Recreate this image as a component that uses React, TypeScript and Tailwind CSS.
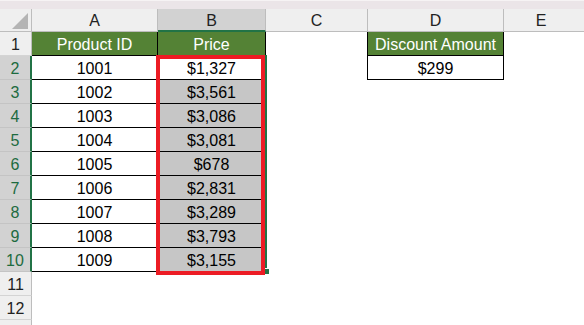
const COLS = "grid grid-cols-[32px_126px_108px_102px_136px_1fr]"
const CELL = "flex items-center justify-center pt-[3px]"

const prices = [
  ["1001", "$1,327"],
  ["1002", "$3,561"],
  ["1003", "$3,086"],
  ["1004", "$3,081"],
  ["1005", "$678"],
  ["1006", "$2,831"],
  ["1007", "$3,289"],
  ["1008", "$3,793"],
  ["1009", "$3,155"],
]

function RowHead({ n, selected }: { n?: number; selected?: boolean }) {
  return selected ? (
    <div className={`${CELL} border-b border-r-2 border-b-[#c4c4c4] border-r-[#217346] bg-[#d2d2d2] text-[#1d6b40]`}>
      {n}
    </div>
  ) : (
    <div className={`${CELL} border-b border-r border-b-[#d4d4d4] border-r-[#bdbdbd] bg-[#efefef] text-[#222]`}>
      {n}
    </div>
  )
}

function ColumnHeaders() {
  return (
    <div className={`${COLS} h-[23px] bg-[#efefef] text-[#222]`}>
      <div className="relative border-b border-r border-[#bdbdbd]">
        <svg className="absolute left-[12px] top-[4px]" width="17" height="16" viewBox="0 0 17 16">
          <polygon points="16,0 16,16 0,16" fill="#b4b4b4" />
        </svg>
      </div>
      <div className="flex items-center justify-center border-b border-r border-[#bdbdbd] pt-[2px]">A</div>
      <div className="flex items-center justify-center border-b-2 border-r border-b-[#217346] border-r-[#bdbdbd] bg-[#d2d2d2] pt-[2px]">B</div>
      <div className="flex items-center justify-center border-b border-r border-[#bdbdbd] pt-[2px]">C</div>
      <div className="flex items-center justify-center border-b border-r border-[#bdbdbd] pt-[2px]">D</div>
      <div className="flex items-center justify-center border-b border-[#bdbdbd] pr-[6px] pt-[2px]">E</div>
    </div>
  )
}

export default function App() {
  return (
    <div
      className="relative h-[325px] w-[584px] overflow-hidden bg-white text-[16px] leading-none text-black"
      style={{ fontFamily: '"Liberation Sans", Arial, sans-serif' }}
    >
      <div className="h-[9px] border-t border-[#f6f3f4] bg-[#ebe5e8]" />
      <ColumnHeaders />

      {/* row 1: headers */}
      <div className={`${COLS} h-[24px]`}>
        <RowHead n={1} />
        <div className={`${CELL} border-b border-r border-black bg-[#548235] text-white`}>Product ID</div>
        <div className={`${CELL} border-b border-r border-black bg-[#548235] text-white`}>Price</div>
        <div className="border-r border-black" />
        <div className={`${CELL} border-b border-r border-black bg-[#548235] text-white`}>Discount Amount</div>
        <div />
      </div>

      {prices.map(([id, price], i) => (
        <div key={id} className={`${COLS} h-[24px]`}>
          <RowHead n={i + 2} selected />
          <div className={`${CELL} border-b border-r border-black`}>{id}</div>
          <div className={`${CELL} border-b border-r border-black ${i === 0 ? "bg-white" : "bg-[#c6c6c6]"}`}>
            {price}
          </div>
          <div className={i === 0 ? "border-r border-black" : ""} />
          {i === 0 ? <div className={`${CELL} border-b border-r border-black`}>$299</div> : <div />}
          <div />
        </div>
      ))}

      {[11, 12, undefined].map((n, i) => (
        <div key={i} className={`${COLS} h-[24px]`}>
          <RowHead n={n} />
          <div />
          <div />
          <div />
          <div />
          <div />
        </div>
      ))}

      {/* selection frame with fill handle */}
      <div className="absolute left-[157px] top-[55px] h-[218px] w-[110px] border-2 border-[#217346]" />
      <div className="absolute left-[263px] top-[268px] h-[7px] w-[7px] border border-white bg-[#217346]" />

      {/* red highlight */}
      <div className="absolute left-[156px] top-[55px] h-[220px] w-[109px] border-4 border-[#ec1c24]" />
    </div>
  )
}
